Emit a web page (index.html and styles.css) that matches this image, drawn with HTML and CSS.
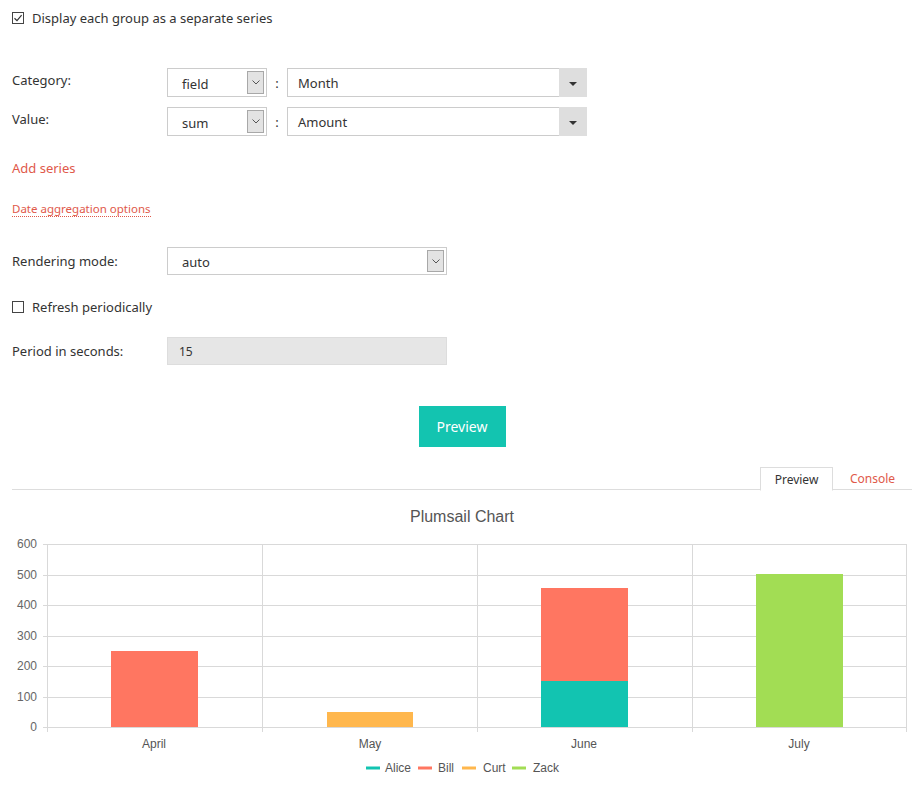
FILE: index.html
```html
<!DOCTYPE html>
<html>
<head>
<meta charset="utf-8">
<link rel="stylesheet" href="styles.css">
</head>
<body>
<div class="page">
  <label class="check-row first">
    <span class="checkbox checked"><svg width="12" height="12" viewBox="0 0 12 12"><path d="M2.5 6.2 L5 8.6 L9.6 3.2" fill="none" stroke="#333" stroke-width="1.2"/></svg></span>
    <span>Display each group as a separate series</span>
  </label>

  <div class="form-row row-category">
    <div class="label">Category:</div>
    <div class="select small"><span class="val">field</span><span class="arrow"><svg width="8" height="5" viewBox="0 0 8 5"><path d="M0.5 0.5 L4 4 L7.5 0.5" fill="none" stroke="#555" stroke-width="1"/></svg></span></div>
    <div class="colon">:</div>
    <div class="combo"><span class="val">Month</span><span class="caret"><span class="tri"></span></span></div>
  </div>
  <div class="form-row row-value">
    <div class="label">Value:</div>
    <div class="select small"><span class="val">sum</span><span class="arrow"><svg width="8" height="5" viewBox="0 0 8 5"><path d="M0.5 0.5 L4 4 L7.5 0.5" fill="none" stroke="#555" stroke-width="1"/></svg></span></div>
    <div class="colon">:</div>
    <div class="combo"><span class="val">Amount</span><span class="caret"><span class="tri"></span></span></div>
  </div>

  <div class="link add-series">Add series</div>
  <div class="link-small"><span class="dotted">Date aggregation options</span></div>

  <div class="form-row row-render">
    <div class="label">Rendering mode:</div>
    <div class="select wide"><span class="val">auto</span><span class="arrow"><svg width="8" height="5" viewBox="0 0 8 5"><path d="M0.5 0.5 L4 4 L7.5 0.5" fill="none" stroke="#555" stroke-width="1"/></svg></span></div>
  </div>

  <label class="check-row refresh">
    <span class="checkbox"></span>
    <span>Refresh periodically</span>
  </label>

  <div class="form-row row-period">
    <div class="label">Period in seconds:</div>
    <div class="input disabled">15</div>
  </div>

  <div class="btn-row"><button class="btn">Preview</button></div>

  <div class="tabs">
    <div class="tab active">Preview</div>
    <div class="tab">Console</div>
  </div>

  <div class="chart">
    <svg width="900" height="298" viewBox="0 0 900 298" font-family="Liberation Sans, Arial, sans-serif">
      <text x="450" y="32" text-anchor="middle" font-size="16" fill="#555">Plumsail Chart</text>
      <g stroke="#d9d9d9" stroke-width="1">
        <line x1="31" y1="54.5" x2="894" y2="54.5"/>
        <line x1="31" y1="85.5" x2="894" y2="85.5"/>
        <line x1="31" y1="115.5" x2="894" y2="115.5"/>
        <line x1="31" y1="146.5" x2="894" y2="146.5"/>
        <line x1="31" y1="176.5" x2="894" y2="176.5"/>
        <line x1="31" y1="207.5" x2="894" y2="207.5"/>
        <line x1="31" y1="237.5" x2="894" y2="237.5"/>
        <line x1="35.5" y1="54" x2="35.5" y2="242"/>
        <line x1="250.5" y1="54" x2="250.5" y2="242"/>
        <line x1="465.5" y1="54" x2="465.5" y2="242"/>
        <line x1="680.5" y1="54" x2="680.5" y2="242"/>
        <line x1="894.5" y1="54" x2="894.5" y2="242"/>
      </g>
      <g font-size="12" fill="#666" text-anchor="end">
        <text x="25" y="58">600</text>
        <text x="25" y="89">500</text>
        <text x="25" y="119">400</text>
        <text x="25" y="150">300</text>
        <text x="25" y="180">200</text>
        <text x="25" y="211">100</text>
        <text x="25" y="241">0</text>
      </g>
      <rect x="99" y="161" width="87" height="76" fill="#ff7661"/>
      <rect x="315" y="222" width="86" height="15" fill="#ffb74d"/>
      <rect x="529" y="191" width="87" height="46" fill="#12c4b1"/>
      <rect x="529" y="98" width="87" height="93" fill="#ff7661"/>
      <rect x="744" y="84" width="87" height="153" fill="#a2dd54"/>
      <g font-size="12" fill="#555" text-anchor="middle">
        <text x="142" y="258">April</text>
        <text x="358" y="258">May</text>
        <text x="572" y="258">June</text>
        <text x="787" y="258">July</text>
      </g>
      <g font-size="12" fill="#555">
        <line x1="354" y1="278" x2="368" y2="278" stroke="#12c4b1" stroke-width="3"/>
        <text x="373" y="282">Alice</text>
        <line x1="406" y1="278" x2="420" y2="278" stroke="#ff7661" stroke-width="3"/>
        <text x="426" y="282">Bill</text>
        <line x1="450" y1="278" x2="464" y2="278" stroke="#ffb74d" stroke-width="3"/>
        <text x="471" y="282">Curt</text>
        <line x1="500" y1="278" x2="514" y2="278" stroke="#a2dd54" stroke-width="3"/>
        <text x="521" y="282">Zack</text>
      </g>
    </svg>
  </div>
</div>
</body>
</html>
```

FILE: styles.css
```css
* { box-sizing: border-box; }
html, body { margin: 0; padding: 0; background: #fff; }
body {
  font-family: "Noto Sans", "Open Sans", sans-serif;
  font-size: 13px;
  color: #333;
}
.page {
  width: 916px;
  padding: 0 4px 0 12px;
}
.check-row {
  display: flex;
  align-items: center;
  height: 20px;
  gap: 8px;
}
.check-row.first { margin-top: 8px; }
.checkbox {
  width: 12px;
  height: 12px;
  border: 1px solid #444;
  display: inline-flex;
  align-items: center;
  justify-content: center;
  background: #fff;
}
.checkbox svg { display: block; margin: -1px; }
.form-row {
  display: flex;
  align-items: center;
}
.label { width: 155px; }
.row-category .label, .row-value .label { margin-bottom: 6px; }
.row-category { margin-top: 40px; height: 29px; }
.row-value { margin-top: 10px; height: 29px; }
.select {
  height: 29px;
  border: 1px solid #ccc;
  background: #fff;
  display: flex;
  align-items: center;
  padding: 2px;
}
.select .val { flex: 1; padding-left: 12px; padding-top: 2px; }
.select .arrow {
  width: 17px;
  height: 100%;
  background: #e3e3e3;
  border: 1px solid #a8a8a8;
  display: flex;
  align-items: center;
  justify-content: center;
}
.select.small { width: 100px; }
.select.wide { width: 280px; height: 28px; }
.colon { width: 20px; text-align: center; }
.combo {
  width: 300px;
  height: 29px;
  border: 1px solid #ccc;
  display: flex;
  align-items: stretch;
}
.combo .val { flex: 1; padding-left: 10px; display: flex; align-items: center; }
.combo .caret {
  width: 28px;
  background: #dedede;
  display: flex;
  align-items: center;
  justify-content: center;
  margin: -1px -1px -1px 0;
}
.tri {
  width: 0; height: 0;
  border-left: 4px solid transparent;
  border-right: 4px solid transparent;
  border-top: 4px solid #333;
  margin-top: 2px;
}
.link { color: #e0594a; }
.add-series { margin-top: 22px; height: 20px; line-height: 20px; }
.link-small {
  margin-top: 22px;
  font-size: 11.5px;
  color: #e0594a;
  height: 18px;
  line-height: 18px;
}
.dotted { border-bottom: 1px dotted #e0594a; padding-bottom: 0; }
.row-render { margin-top: 29px; height: 28px; }
.refresh { margin-top: 22px; }
.row-period { margin-top: 20px; height: 28px; }
.input {
  width: 280px;
  height: 28px;
  border: 1px solid #ddd;
  padding-left: 11px;
  display: flex;
  align-items: center;
  font-size: 12px;
}
.input.disabled { background: #e6e6e6; color: #333; }
.btn-row { display: flex; justify-content: center; margin-top: 41px; }
.btn {
  width: 87px;
  height: 41px;
  background: #13c4b0;
  border: none;
  color: #fff;
  font-family: "Noto Sans", "Open Sans", sans-serif;
  font-size: 14px;
  padding: 0;
}
.tabs {
  margin-top: 20px;
  width: 900px;
  display: flex;
  justify-content: flex-end;
  border-bottom: 1px solid #ddd;
  height: 23px;
}
.tab {
  font-size: 12px;
  display: flex;
  align-items: center;
  justify-content: center;
  height: 23px;
}
.tab.active {
  width: 73px;
  border: 1px solid #ddd;
  border-bottom: 1px solid #fff;
  background: #fff;
  color: #333;
  margin-bottom: -1px;
  height: 24px;
}
.tab:not(.active) { width: 79px; color: #e0594a; }
.chart { width: 900px; height: 298px; }
.chart svg { display: block; }
```
